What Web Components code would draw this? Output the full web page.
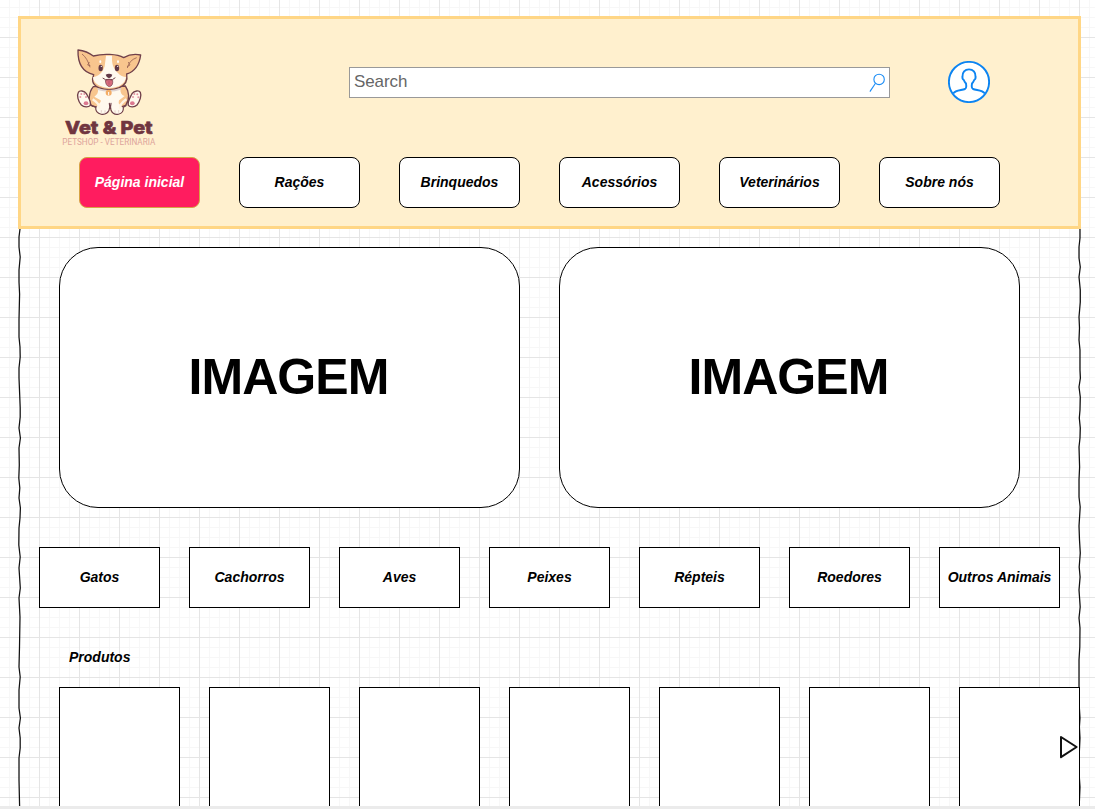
<!DOCTYPE html>
<html lang="pt-BR">
<head>
<meta charset="utf-8">
<title>Vet &amp; Pet</title>
<style>
html,body{margin:0;height:100%;overflow:hidden;background:#fff}
body{font-family:"Liberation Sans",Arial,sans-serif;color:#000}
</style>
</head>
<body>
<pet-page></pet-page>
<script>
const define = (name, html, setup) => customElements.define(name, class extends HTMLElement {
  constructor() {
    super();
    const t = document.createElement('template');
    t.innerHTML = html;
    this.attachShadow({mode: 'open'}).append(t.content.cloneNode(true));
    if (setup) setup(this.shadowRoot);
  }
});

define('pet-logo', `<style>:host{display:block;width:120px;height:115px}svg{display:block}</style>
<svg width="120" height="115" viewBox="0 0 360 345">
<g stroke="#70404a" stroke-width="4" stroke-linejoin="round" stroke-linecap="round">
<path d="M130 140C115 158 114 188 126 198L148 203L210 202L227 196C240 178 238 155 226 138Z" fill="#f8c58e"/>
<path d="M130 48C116 37 100 32 84 30C83 66 96 96 131 104C126 118 124 132 146 143C165 150 190 150 208 143C231 133 233 118 230 102C256 94 268 74 272 45C254 41 238 43 221 53C202 42 160 40 130 48Z" fill="#f8c58e"/>
<path d="M85 157C88 151 103 151 109 161C115 172 124 184 121 196C115 203 102 202 94 195C84 184 80 166 85 157Z" fill="#fff9ee"/>
<path d="M271 157C268 151 253 151 246 161C241 172 232 184 235 196C241 203 253 202 261 195C270 184 275 166 271 157Z" fill="#fff9ee"/>
</g>
<path d="M168 47H186C185 69 188 83 203 98C211 107 220 110 228 111C226 131 208 143 177 144C148 142 130 130 129 112C146 110 158 97 164 79Z" fill="#fff9ee"/>
<path d="M144 148Q177 156 211 147C211 159 215 166 224 168Q200 187 188 194H167Q150 177 133 170C142 164 145 158 144 148Z" fill="#fff9ee"/>
<path d="M152 177C157 190 136 196 139 208C147 227 172 227 178 211L181 198L188 217C202 229 219 221 219 205L206 190L207 177" fill="#fff9ee"/>
<path d="M128 178C142 187 150 196 147 206M229 178C216 187 208 196 211 206" fill="none" stroke="#fff4e2" stroke-width="7"/>
<path d="M127 197L137 202C136 226 168 230 177 211C180 204 180 198 178 190M228 197L220 202C222 226 191 230 183 211C181 204 181 198 183 190" fill="none" stroke="#70404a" stroke-width="3.5" stroke-linecap="round"/>
<path d="M154 218V210M165 219V211M195 219V211M206 218V210" stroke="#d8bdb6" stroke-width="2"/>
<path d="M96 42Q112 54 120 82M118 66L113 75L121 77M260 53Q237 61 232 84M235 66L240 75L231 80" fill="none" stroke="#986052" stroke-width="2.5"/>
<path d="M142 144Q176 157 214 143L212 149Q180 161 143 150Z" fill="#dcd1d0"/>
<g fill="#613846"><ellipse cx="152" cy="84" rx="6.5" ry="10"/><ellipse cx="201" cy="84" rx="6.5" ry="10"/><path d="M167 104Q177 98 187 104Q185 113 177 115Q169 112 167 104Z"/></g>
<g fill="#fff"><circle cx="154" cy="79" r="2"/><circle cx="203" cy="79" r="2"/><ellipse cx="151" cy="65" rx="3" ry="4"/><ellipse cx="204" cy="65" rx="3" ry="4"/></g>
<path d="M158 114Q166 122 177 118Q188 122 196 113" fill="none" stroke="#70404a" stroke-width="3"/>
<path d="M166 121Q177 116 188 121Q190 138 178 140Q167 138 166 121Z" fill="#d66b7c" stroke="#70404a" stroke-width="2"/>
<path d="M177 122V134" stroke="#b34f68" stroke-width="2"/>
<circle cx="176" cy="158" r="9" fill="#f3ad67"/><path d="M176 156V166" stroke="#fff" stroke-width="3"/>
<g fill="#dc7890"><ellipse cx="108" cy="190" rx="7" ry="6"/><ellipse cx="247" cy="190" rx="7" ry="6"/><g fill="#e593a2"><circle cx="91" cy="171" r="3"/><circle cx="94" cy="162" r="3"/><circle cx="103" cy="162" r="3"/><circle cx="108" cy="171" r="3"/><circle cx="249" cy="171" r="3"/><circle cx="253" cy="162" r="3"/><circle cx="262" cy="163" r="3"/><circle cx="265" cy="172" r="3"/></g></g>
<text x="45" y="283" font-family="Inter,sans-serif" font-weight="800" font-size="53" fill="#70353f" stroke="#70353f" stroke-width="2" stroke-linejoin="round" textLength="263" lengthAdjust="spacingAndGlyphs">Vet &amp; Pet</text>
<text x="37" y="314" font-family="Roboto,sans-serif" font-size="25" fill="#dda39b" textLength="279" lengthAdjust="spacingAndGlyphs">PETSHOP - VETERINARIA</text>
</svg>`);

define('search-field', `<style>
:host{display:flex;box-sizing:border-box;width:541px;height:31px;border:1px solid #999;background:#fff;padding:0 3px 0 4px;justify-content:space-between;align-items:flex-start}
span{font-size:17px;line-height:27px;color:#666;letter-spacing:-.1px}svg{display:block;margin-top:5px}</style>
<span><slot></slot></span>
<svg width="17" height="20" viewBox="0 0 17 20" fill="none" stroke="#1a8cf5" stroke-width="1.1"><circle cx="10.1" cy="6.4" r="5.2"/><path d="M6.5 10.2L.9 18.6"/></svg>`);

define('user-avatar', `<style>:host{display:block;width:42px;height:42px}svg{display:block}</style>
<svg width="42" height="42" viewBox="0 0 42 42"><circle cx="21" cy="21" r="20.1" fill="#fff" stroke="#0c84f2" stroke-width="1.9"/>
<path d="M5.1 32.5C7.5 28.8 13.5 29.4 17 28Q18.8 27 18 22.5C16.5 21 16.2 20 15.8 19Q14 18.2 14.5 15.5C14.3 11.5 16.8 8.4 21 8.4S27.7 11.5 27.5 15.5Q28 18.2 26.2 19C25.8 20 25.5 21 24 22.5Q23.2 27 25 28C28.5 29.4 34.5 28.8 36.9 32.5" fill="none" stroke="#0c84f2" stroke-width="1.9"/></svg>`);

define('nav-button', `<style>:host{display:flex;box-sizing:border-box;width:121px;height:51px;border:1px solid #000;border-radius:8px;background:#fff;padding-bottom:2px;align-items:center;justify-content:center;font:italic bold 14px "Liberation Sans",Arial,sans-serif;white-space:nowrap}
:host([active]){background:#ff1c5f;border-color:#d6a344;color:#fff}</style><span><slot></slot></span>`);

define('pet-header', `<style>
:host{display:block;box-sizing:border-box;width:1063px;height:213px;margin-left:18px;border:3px solid #ffd685;background:#fff0ce}
.top{display:flex;align-items:flex-start;height:138px;padding-left:29px}
pet-logo{margin-top:21px}search-field{margin:48px 0 0 179px}user-avatar{margin:42px 0 0 58px}
nav{display:flex;gap:39px;padding-left:58px}</style>
<div class="top"><pet-logo></pet-logo><search-field>Search</search-field><user-avatar></user-avatar></div>
<nav><slot></slot></nav>`);

define('banner-card', `<style>:host{display:flex;box-sizing:border-box;width:461px;height:261px;border:1px solid #000;border-radius:39px;background:#fff;padding:0 2px 2px 0;align-items:center;justify-content:center;font-size:50px;font-weight:bold;letter-spacing:-.9px}</style><span><slot></slot></span>`);

define('category-box', `<style>:host{display:flex;box-sizing:border-box;width:121px;height:61px;border:1px solid #000;background:#fff;padding-bottom:2px;align-items:center;justify-content:center;font:italic bold 14px "Liberation Sans",Arial,sans-serif;white-space:nowrap}</style><span><slot></slot></span>`);

define('product-card', `<style>:host{display:block;box-sizing:border-box;width:121px;height:119px;border:1px solid #000;border-bottom:0;background:#fff}</style>`);

define('next-arrow', `<style>:host{display:block;position:absolute;right:1px;top:49px}svg{display:block}</style>
<svg width="20" height="23" viewBox="0 0 20 23"><path d="M2 1L17.6 11L2 21.2Z" fill="#fff" stroke="#111" stroke-width="2" stroke-linejoin="round"/></svg>`);

// Hand-drawn side edges of the page frame.
define('sketch-frame', `<style>:host{display:block;position:absolute;left:0;top:0}svg{display:block}</style>
<svg width="1095" height="806" viewBox="0 0 1095 806" fill="none" stroke="#111" stroke-width="1.25"><path class="l"/><path class="r"/></svg>`, root => {
  const draw = (cls, pts) => root.querySelector(cls).setAttribute('d', 'M' + pts.map(p => p.join(' ')).join('L'));
  draw('.l', [[20,229],[19,237],[19,247],[20.2,257],[19,270],[19,282],[19.6,294],[19,320],[19,337],[20,347],[20.2,357],[19,368],[19,378],[19.7,395],[20.2,408],[20.2,417],[19,428],[20.4,438],[19,448],[19.3,465],[18.8,478],[19.8,488],[19,498],[20.4,508],[20,518],[19,528],[18.8,545],[20.2,557],[19,568],[20.3,588],[19,598],[20,617],[19.5,647],[19,667],[20.2,677],[19,690],[19,708],[20.4,718],[19,728],[20.2,738],[20.2,748],[19,758],[19,780],[19.6,806]]);
  draw('.r', [[1080,229],[1080,238],[1079,247],[1079,258],[1080.3,267],[1079,277],[1080.3,290],[1080.3,302],[1079,317],[1079.5,328],[1079,340],[1080,350],[1080,370],[1080.4,378],[1079,387],[1080.3,397],[1080,410],[1079.3,418],[1080.3,428],[1080,438],[1079,447],[1079.6,467],[1079,480],[1079,497],[1080.2,507],[1079,526],[1079.5,540],[1080.3,553],[1079.2,567],[1080.1,577],[1079,590],[1080.2,607],[1079,618],[1080,628],[1079.8,647],[1079,660],[1079,687],[1079.2,705],[1080,718],[1079.4,727],[1080,738],[1079.2,755],[1079.2,775],[1080,787],[1079.2,806]]);
});

define('pet-page', `<style>
:host{display:flex;flex-direction:column;box-sizing:border-box;position:relative;width:1095px;height:809px;padding-top:16px;overflow:hidden;background-color:#fff;
background-image:linear-gradient(90deg,#e5e5e5 1px,transparent 1px),linear-gradient(#e5e5e5 1px,transparent 1px),linear-gradient(90deg,#f7f7f7 1px,transparent 1px),linear-gradient(#f7f7f7 1px,transparent 1px);
background-size:40px 40px,40px 40px,10px 10px,10px 10px;background-position:39px 0,0 37px,9px 0,0 7px}
pet-header,section,h2,footer{position:relative;flex:none}
section{display:flex}
.banners{gap:39px;margin:18px 0 0 59px}
.categories{gap:29px;margin:39px 0 0 39px}
h2{margin:41px 0 0 69px;font:italic bold 14px/16px "Liberation Sans",Arial,sans-serif}
.products{gap:29px;width:1021px;margin:22px 0 0 59px}
footer{height:3px;background:#ebebeb}
</style>
<sketch-frame></sketch-frame>
<pet-header><nav-button active>Página inicial</nav-button><nav-button>Rações</nav-button><nav-button>Brinquedos</nav-button><nav-button>Acessórios</nav-button><nav-button>Veterinários</nav-button><nav-button>Sobre nós</nav-button></pet-header>
<section class="banners"><banner-card>IMAGEM</banner-card><banner-card>IMAGEM</banner-card></section>
<section class="categories"><category-box>Gatos</category-box><category-box>Cachorros</category-box><category-box>Aves</category-box><category-box>Peixes</category-box><category-box>Répteis</category-box><category-box>Roedores</category-box><category-box>Outros Animais</category-box></section>
<h2>Produtos</h2>
<section class="products"><product-card></product-card><product-card></product-card><product-card></product-card><product-card></product-card><product-card></product-card><product-card></product-card><product-card></product-card><next-arrow></next-arrow></section>
<footer></footer>`);
</script>
</body>
</html>
